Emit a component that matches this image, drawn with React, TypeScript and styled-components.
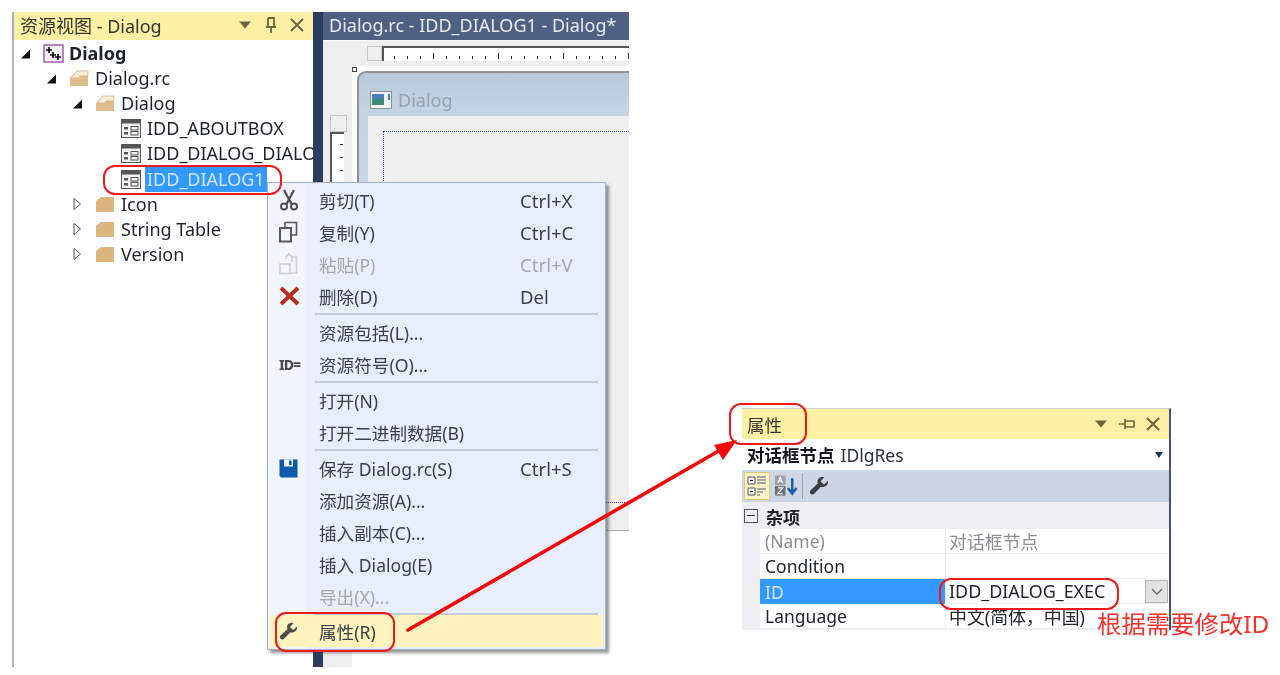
import React from "react"
import styled, { createGlobalStyle } from "styled-components"

const GlobalStyle = createGlobalStyle`
  html, body { margin: 0; padding: 0; background: #fff; }
  body {
    font-family: "Noto Sans", "Noto Sans CJK SC", sans-serif;
    color: #2b2f36;
    overflow: hidden;
  }
`

const Stage = styled.div`
  position: relative;
  width: 1280px;
  height: 675px;
  overflow: hidden;
  background: #fff;
  filter: blur(0.5px);
`

/* ---- left window ---- */
const Ide = styled.div`
  position: absolute;
  left: 12px;
  top: 12px;
  width: 617px;
  height: 655px;
  display: flex;
`

const ResourcePanel = styled.section`
  width: 299px;
  border-left: 2px solid #a9b4c6;
  background: #fff;
  display: flex;
  flex-direction: column;
  overflow: hidden;
`

const PanelTitle = styled.header`
  height: 28px;
  flex: none;
  box-sizing: border-box;
  background: #fcf0a4;
  display: flex;
  align-items: center;
  padding: 0 9px 2px 6px;
  font-size: 18px;
  color: #33352f;
`

const TitleText = styled.span`
  flex: 1;
  white-space: nowrap;
`

const TitleTools = styled.div<{ $gap: number }>`
  display: flex;
  align-items: center;
  gap: ${(p) => p.$gap}px;
`

const Tree = styled.ul`
  list-style: none;
  margin: 0;
  padding: 1px 0 0;
`

const TreeRow = styled.li<{ $level: number; $bold?: boolean }>`
  height: 25.1px;
  display: flex;
  align-items: center;
  padding-left: ${(p) => 6 + p.$level * 26}px;
  font-size: 18px;
  font-weight: ${(p) => (p.$bold ? 700 : 400)};
  color: #1f2328;
  white-space: nowrap;
`

const Twisty = styled.span`
  width: 23px;
  flex: none;
  display: flex;
  justify-content: flex-start;
`

const NodeIcon = styled.span`
  width: 26px;
  flex: none;
  display: flex;
  align-items: center;
`

const NodeLabel = styled.span<{ $selected?: boolean }>`
  line-height: 25px;
  padding: 0 2px;
  margin-left: -2px;
  background: ${(p) => (p.$selected ? "#3399ff" : "transparent")};
  color: ${(p) => (p.$selected ? "#cfe6ff" : "inherit")};
`

const Splitter = styled.div`
  width: 10px;
  flex: none;
  background: #2c3e60;
`

const EditorPane = styled.section`
  flex: 1;
  display: flex;
  flex-direction: column;
  overflow: hidden;
`

const EditorTab = styled.header`
  height: 28px;
  flex: none;
  box-sizing: border-box;
  background: #4e6183;
  color: #e6ebf3;
  font-size: 18px;
  display: flex;
  align-items: center;
  padding: 0 0 2px 6px;
  white-space: nowrap;
`

const Surface = styled.div`
  flex: 1;
  display: flex;
  min-height: 0;
`

const LeftRail = styled.div`
  width: 29px;
  flex: none;
  background: #eeeeef;
  border-top: 1px solid #f8f8f8;
  padding: 74px 0 0 7px;
  box-sizing: border-box;
`

const VRulerHead = styled.div`
  width: 15px;
  height: 15px;
  background: #f0f0f0;
  border: 1px solid #c6c8cc;
`

const VRuler = styled.div`
  width: 14px;
  height: 70px;
  background: #fff;
  border-left: 2px solid #555;
  border-top: 2px solid #555;
  display: flex;
  flex-direction: column;
  align-items: flex-end;
  gap: 12px;
  padding-top: 10px;
  box-sizing: border-box;
`

const VTick = styled.i`
  display: block;
  width: 3px;
  height: 1px;
  background: #333;
  margin-right: 1px;
`

const DesignColumn = styled.div`
  flex: 1;
  height: 490px;
  display: flex;
  flex-direction: column;
  background: #eeeeef;
  border-top: 1px solid #f8f8f8;
  overflow: hidden;
`

const HRulerRow = styled.div`
  height: 25px;
  flex: none;
  display: flex;
  padding: 5px 0 0 15px;
  box-sizing: border-box;
`

const RulerCorner = styled.div`
  width: 15px;
  height: 15px;
  flex: none;
  background: #f0f0f0;
  border: 1px solid #c6c8cc;
  box-sizing: border-box;
`

const HRuler = styled.div`
  flex: 1;
  height: 15px;
  background: #fff;
  border-left: 2px solid #555;
  border-top: 2px solid #555;
  display: flex;
  align-items: flex-end;
  gap: 12px;
  padding: 0 0 2px 10px;
  box-sizing: border-box;
  overflow: hidden;
`

const HTick = styled.i<{ $major: boolean }>`
  display: block;
  flex: none;
  width: 1px;
  height: ${(p) => (p.$major ? 6 : 3)}px;
  background: #333;
`

const DesignCanvas = styled.div`
  flex: 1;
  background: #fff;
  padding: 5px 0 0 5px;
  position: relative;
  display: flex;
`

const SizeHandle = styled.i`
  position: absolute;
  left: 0;
  top: 1px;
  width: 3px;
  height: 3px;
  border: 1px solid #444;
  background: #fff;
`

const DialogFrame = styled.div`
  flex: 1;
  border-left: 2px solid #8f9398;
  border-top: 2px solid #8f9398;
  border-bottom: 1px solid #a9abad;
  border-top-left-radius: 9px;
  background: linear-gradient(#b7c9da 0, #c4d4e3 40px, #d8e5f1 100%);
  display: flex;
  flex-direction: column;
  padding-left: 9px;
`

const DialogCaption = styled.div`
  height: 43px;
  flex: none;
  box-sizing: border-box;
  display: flex;
  align-items: center;
  gap: 6px;
  padding: 10px 0 0 2px;
  font-size: 18px;
  color: #9aa3ae;
`

const DialogClient = styled.div`
  flex: 1;
  background: #f0f0f0;
  padding: 15px 0 27px 15px;
  display: flex;
`

const GuideBox = styled.div`
  flex: 1;
  border-left: 1px dotted #3030ff;
  border-top: 1px dotted #3030ff;
  border-bottom: 1px dotted #3030ff;
`

/* ---- context menu ---- */
const Menu = styled.nav`
  position: absolute;
  left: 267px;
  top: 182px;
  width: 339px;
  box-sizing: border-box;
  background: linear-gradient(90deg, #f2f5fe 0, #f2f5fe 39px, #e8eefc 39px);
  border: 1px solid #a4afc0;
  box-shadow: 3px 3px 3px rgba(60, 60, 60, 0.55);
  padding: 1px 2px 2px 2px;
`

const MenuRow = styled.div<{ $disabled?: boolean }>`
  height: 32px;
  display: flex;
  align-items: center;
  font-size: 17.6px;
  white-space: nowrap;
  color: ${(p) => (p.$disabled ? "#a6a8ae" : "#3a3f48")};
`

const HotMenuRow = styled(MenuRow)`
  margin-top: -1px;
  background: #fef2bd;
`

const MenuIcon = styled.span`
  width: 49px;
  flex: none;
  padding-left: 9px;
  box-sizing: border-box;
  display: flex;
  align-items: center;
`

const MenuLabel = styled.span`
  width: 201px;
  flex: none;
`

const MenuKey = styled.span`
  font-size: 18.6px;
`

const MenuSeparator = styled.div`
  height: 2px;
  margin: 1px 5px 1px 45px;
  background: #c4cad6;
`

const IdGlyph = styled.span`
  font-size: 14px;
  font-weight: 800;
  color: #4a4a4a;
  letter-spacing: -1px;
`

/* ---- properties window ---- */
const PropsWindow = styled.section`
  position: absolute;
  left: 742px;
  top: 408px;
  width: 429px;
  height: 222px;
  box-sizing: border-box;
  border-right: 2px solid #3f5375;
  border-top: 1px solid #d0d0d0;
  display: flex;
  flex-direction: column;
  background: #fff;
`

const PropsTitle = styled.header`
  height: 30px;
  flex: none;
  background: #fcf0a4;
  display: flex;
  align-items: center;
  padding: 0 9px 0 5px;
  font-size: 17.5px;
  color: #33352f;
`

const PropsObject = styled.div`
  height: 31px;
  flex: none;
  display: flex;
  align-items: center;
  padding: 0 6px 0 5px;
  font-size: 17.5px;
  color: #2d3138;
  white-space: nowrap;
`

const ObjectName = styled.strong`
  font-weight: 700;
  margin-right: 6px;
  color: #15171a;
`

const ObjectType = styled.span`
  flex: 1;
`

const PropsToolbar = styled.div`
  height: 32px;
  flex: none;
  background: #ced5e4;
  display: flex;
  align-items: center;
  padding-left: 2px;
  gap: 3px;
`

const ToolButton = styled.span<{ $active?: boolean }>`
  width: 26px;
  height: 28px;
  display: flex;
  align-items: center;
  justify-content: center;
  box-sizing: border-box;
  background: ${(p) => (p.$active ? "#fdf3c8" : "transparent")};
  border: 1px solid ${(p) => (p.$active ? "#e0c878" : "transparent")};
`

const ToolDivider = styled.i`
  display: block;
  width: 1px;
  height: 26px;
  background: #98a2b6;
`

const Category = styled.div`
  height: 27px;
  flex: none;
  box-sizing: border-box;
  background: #ededf2;
  display: flex;
  align-items: center;
  padding: 1px 0 0 2px;
  gap: 8px;
  font-size: 17px;
  font-weight: 700;
  color: #202226;
`

const Expander = styled.span`
  width: 12px;
  height: 12px;
  border: 1px solid #555;
  position: relative;
  flex: none;
  &::after {
    content: "";
    position: absolute;
    left: 2px;
    right: 2px;
    top: 5px;
    height: 1px;
    background: #333;
  }
`

const PropGrid = styled.div`
  flex: 1;
  background: #ededf2;
  padding: 0 0 1px 18px;
  display: grid;
  grid-template-columns: 185px 1fr;
  grid-auto-rows: 25px;
  min-height: 0;
`

const PropName = styled.div<{ $selected?: boolean; $muted?: boolean }>`
  display: flex;
  align-items: center;
  padding-left: 5px;
  font-size: 17.5px;
  background: ${(p) => (p.$selected ? "#3399ff" : "#fff")};
  color: ${(p) => (p.$selected ? "#cfe6ff" : p.$muted ? "#8c8e92" : "#22252a")};
  border-bottom: ${(p) => (p.$selected ? "0" : "1px solid #f0f0f2")};
  box-sizing: border-box;
`

const PropValue = styled.div<{ $muted?: boolean }>`
  display: flex;
  align-items: center;
  justify-content: space-between;
  padding: 0 1px 0 3px;
  margin-left: 1px;
  font-size: 17.9px;
  background: #fff;
  color: ${(p) => (p.$muted ? "#8c8e92" : "#22252a")};
  border-bottom: 1px solid #f0f0f2;
  box-sizing: border-box;
  white-space: nowrap;
`

const ComboButton = styled.span`
  width: 23px;
  height: 23px;
  flex: none;
  display: flex;
  align-items: center;
  justify-content: center;
  background: #e2e2e2;
  border: 1px solid #b4b4b4;
  box-sizing: border-box;
`

/* ---- annotations ---- */
const Callout = styled.div<{ $x: number; $y: number; $w: number; $h: number; $r: number }>`
  position: absolute;
  left: ${(p) => p.$x}px;
  top: ${(p) => p.$y}px;
  width: ${(p) => p.$w}px;
  height: ${(p) => p.$h}px;
  box-sizing: border-box;
  border: 2px solid #f01818;
  border-radius: ${(p) => p.$r}px;
  pointer-events: none;
`

const Note = styled.div`
  position: absolute;
  left: 1097px;
  top: 608px;
  font-size: 24.4px;
  line-height: 32px;
  color: #f2312c;
  white-space: nowrap;
`

const ArrowLayer = styled.svg`
  position: absolute;
  left: 0;
  top: 0;
  pointer-events: none;
`

/* ---- drawn icons ---- */
const Collapse = () => (
  <svg width="12" height="12" viewBox="0 0 12 12">
    <path d="M10 1.5V10.5H1Z" fill="#111" />
  </svg>
)

const Expand = () => (
  <svg width="12" height="14" viewBox="0 0 12 14">
    <path d="M2 1.5L8.5 7L2 12.5Z" fill="#fff" stroke="#555" />
  </svg>
)

const RootIcon = () => (
  <svg width="21" height="19" viewBox="0 0 21 19">
    <rect x="1" y="1" width="19" height="17" fill="#f4f1f6" stroke="#a868b0" strokeWidth="1.6" />
    <path d="M6 3v6M3 6h6M10 8v6M7 11h6M15 10v6M12 13h6" stroke="#111" strokeWidth="1.7" />
  </svg>
)

const FolderOpen = () => (
  <svg width="20" height="17" viewBox="0 0 20 17">
    <path d="M1 7L8 1H19V15H1Z" fill="#f3e4cd" />
    <path d="M1 8H9L11 6H19V16H1Z" fill="#dfbd8a" />
    <path d="M8 1H19V6H11L9 8H2Z" fill="#f6ecdc" stroke="#dfbd8a" />
  </svg>
)

const FolderClosed = () => (
  <svg width="20" height="17" viewBox="0 0 20 17">
    <path d="M1 5L6 1H19V16H1Z" fill="#dcb67e" />
  </svg>
)

const DialogNode = () => (
  <svg width="20" height="19" viewBox="0 0 20 19">
    <rect x="0.5" y="0.5" width="19" height="18" fill="#f2f2f2" stroke="#555" />
    <rect x="0.5" y="0.5" width="19" height="4" fill="#555" />
    <path d="M3 8h4v2.5H3zM3 13h4v2.5H3z" fill="#555" />
    <rect x="10" y="7.5" width="7" height="3.5" fill="none" stroke="#555" />
    <rect x="10" y="12.5" width="7" height="3.5" fill="none" stroke="#555" />
  </svg>
)

const Scissors = () => (
  <svg width="20" height="22" viewBox="0 0 20 22">
    <path d="M5 1L12.5 15M15 1L7.5 15" stroke="#4c4f52" strokeWidth="2.2" fill="none" />
    <circle cx="5" cy="17.5" r="3" fill="none" stroke="#4c4f52" strokeWidth="2" />
    <circle cx="15" cy="17.5" r="3" fill="none" stroke="#4c4f52" strokeWidth="2" />
  </svg>
)

const CopyIcon = () => (
  <svg width="19" height="22" viewBox="0 0 19 22">
    <path d="M6 6V1.5H17.5V14H12" fill="none" stroke="#55585c" strokeWidth="1.6" />
    <rect x="1" y="7" width="11" height="13.5" fill="#f2f5fe" stroke="#55585c" strokeWidth="2" />
  </svg>
)

const PasteIcon = () => (
  <svg width="19" height="22" viewBox="0 0 19 22">
    <path d="M7 6V4L10 1L13 4V9M13 4H17.5V20H10" fill="none" stroke="#cdd0d6" strokeWidth="1.6" />
    <rect x="1" y="11" width="10" height="9.5" fill="none" stroke="#cdd0d6" strokeWidth="1.6" />
  </svg>
)

const DeleteIcon = () => (
  <svg width="21" height="20" viewBox="0 0 21 20">
    <path d="M2 2L19 18M19 2L2 18" stroke="#b4301c" strokeWidth="4" />
  </svg>
)

const SaveIcon = () => (
  <svg width="19" height="19" viewBox="0 0 19 19">
    <path d="M0.5 0.5H18.5V18.5H2L0.5 17Z" fill="#0d5aa8" />
    <rect x="5" y="0.5" width="9" height="7" fill="#f2f5fe" />
    <rect x="10" y="1.5" width="2.5" height="4.5" fill="#0d5aa8" />
  </svg>
)

const Wrench = ({ size = 19, color = "#4b4d50" }: { size?: number; color?: string }) => (
  <svg width={size} height={size} viewBox="0 0 19 19">
    <path
      d="M18 4.5L14.2 8L11 5L14.5 1.2C11.5 0 8 2 8 5.2C8 6 8.2 6.6 8.4 7.2L1.5 13.5C0.5 14.6 0.7 15.8 1.5 16.8C2.5 17.8 3.9 17.8 5 16.8L11.4 10.3C14.8 11.4 18.8 8.5 18 4.5Z"
      fill={color}
    />
  </svg>
)

const WindowGlyphs = ({ horizontalPin }: { horizontalPin?: boolean }) => (
  <TitleTools $gap={horizontalPin ? 11 : 13}>
    <svg width="14" height="8" viewBox="0 0 14 8">
      <path d="M1 0.5H13L7 7.5Z" fill="#6d6540" />
    </svg>
    {horizontalPin ? (
      <svg width="16" height="12" viewBox="0 0 16 12">
        <path d="M0 6H6M6 1V11M6 3H15V9H6" fill="none" stroke="#6d6540" strokeWidth="1.6" />
      </svg>
    ) : (
      <svg width="12" height="16" viewBox="0 0 12 16">
        <path d="M6 10V16M1 10H11M3 1V10M3 1H9V10" fill="none" stroke="#6d6540" strokeWidth="1.8" />
      </svg>
    )}
    <svg width="14" height="14" viewBox="0 0 14 14">
      <path d="M1 1L13 13M13 1L1 13" stroke="#6d6540" strokeWidth="2" />
    </svg>
  </TitleTools>
)

const CaptionIcon = () => (
  <svg width="22" height="18" viewBox="0 0 22 18">
    <rect x="0.5" y="0.5" width="21" height="17" fill="#eef2f4" stroke="#8b8f92" />
    <rect x="2" y="3" width="12" height="11" fill="#3e8a78" />
    <rect x="2" y="3" width="12" height="5" fill="#4f7fb0" />
    <rect x="18" y="3" width="2" height="6" fill="#3e8a78" />
  </svg>
)

const CategorizedIcon = () => (
  <svg width="21" height="22" viewBox="0 0 21 22">
    <path d="M1 2h7v7H1zM1 13h7v7H1z" fill="#f4f4f4" stroke="#555" />
    <path d="M3 5.5h3M3 16.5h3" stroke="#111" />
    <path d="M10 2h9M10 5h9M10 8h9M10 14h9M10 17h6M10 20h3" stroke="#8a8d90" strokeWidth="1.4" />
  </svg>
)

const SortIcon = () => (
  <svg width="25" height="24" viewBox="0 0 25 24">
    <rect x="1" y="1" width="11" height="10" fill="#9ca0a6" />
    <rect x="1" y="12" width="11" height="10" fill="#6e7176" />
    <path d="M4 9L6.5 3L9 9M5 7H8M4 14H9L4 20H9" stroke="#fff" strokeWidth="1.3" fill="none" />
    <path d="M19 4V19M14.5 14L19 20L23.5 14" stroke="#1d5fa8" strokeWidth="2.6" fill="none" />
  </svg>
)

const tree = [
  { level: 0, label: "Dialog", bold: true, open: true, icon: <RootIcon /> },
  { level: 1, label: "Dialog.rc", open: true, icon: <FolderOpen /> },
  { level: 2, label: "Dialog", open: true, icon: <FolderOpen /> },
  { level: 3, label: "IDD_ABOUTBOX", icon: <DialogNode /> },
  { level: 3, label: "IDD_DIALOG_DIALOG", icon: <DialogNode /> },
  { level: 3, label: "IDD_DIALOG1", icon: <DialogNode />, selected: true },
  { level: 2, label: "Icon", open: false, icon: <FolderClosed /> },
  { level: 2, label: "String Table", open: false, icon: <FolderClosed /> },
  { level: 2, label: "Version", open: false, icon: <FolderClosed /> },
]

type Item = { label: string; key?: string; icon?: React.ReactNode; disabled?: boolean }

const menuGroups: Item[][] = [
  [
    { label: "剪切(T)", key: "Ctrl+X", icon: <Scissors /> },
    { label: "复制(Y)", key: "Ctrl+C", icon: <CopyIcon /> },
    { label: "粘贴(P)", key: "Ctrl+V", icon: <PasteIcon />, disabled: true },
    { label: "删除(D)", key: "Del", icon: <DeleteIcon /> },
  ],
  [
    { label: "资源包括(L)..." },
    { label: "资源符号(O)...", icon: <IdGlyph>ID=</IdGlyph> },
  ],
  [{ label: "打开(N)" }, { label: "打开二进制数据(B)" }],
  [
    { label: "保存 Dialog.rc(S)", key: "Ctrl+S", icon: <SaveIcon /> },
    { label: "添加资源(A)..." },
    { label: "插入副本(C)..." },
    { label: "插入 Dialog(E)" },
    { label: "导出(X)...", disabled: true },
  ],
]

export default function App() {
  return (
    <Stage>
      <GlobalStyle />
      <Ide>
        <ResourcePanel>
          <PanelTitle>
            <TitleText>资源视图 - Dialog</TitleText>
            <WindowGlyphs />
          </PanelTitle>
          <Tree>
            {tree.map((n) => (
              <TreeRow key={n.label + n.level} $level={n.level} $bold={n.bold}>
                <Twisty>{n.open === undefined ? null : n.open ? <Collapse /> : <Expand />}</Twisty>
                <NodeIcon>{n.icon}</NodeIcon>
                <NodeLabel $selected={n.selected}>{n.label}</NodeLabel>
              </TreeRow>
            ))}
          </Tree>
        </ResourcePanel>
        <Splitter />
        <EditorPane>
          <EditorTab>Dialog.rc - IDD_DIALOG1 - Dialog*</EditorTab>
          <Surface>
            <LeftRail>
              <VRulerHead />
              <VRuler>
                {[0, 1, 2].map((i) => (
                  <VTick key={i} />
                ))}
              </VRuler>
            </LeftRail>
            <DesignColumn>
              <HRulerRow>
                <RulerCorner />
                <HRuler>
                  {Array.from({ length: 20 }, (_, i) => (
                    <HTick key={i} $major={i % 5 === 3} />
                  ))}
                </HRuler>
              </HRulerRow>
              <DesignCanvas>
                <SizeHandle />
                <DialogFrame>
                  <DialogCaption>
                    <CaptionIcon />
                    Dialog
                  </DialogCaption>
                  <DialogClient>
                    <GuideBox />
                  </DialogClient>
                </DialogFrame>
              </DesignCanvas>
            </DesignColumn>
          </Surface>
        </EditorPane>
      </Ide>

      <Menu>
        {menuGroups.map((group, g) => (
          <React.Fragment key={g}>
            {group.map((item) => (
              <MenuRow key={item.label} $disabled={item.disabled}>
                <MenuIcon>{item.icon}</MenuIcon>
                <MenuLabel>{item.label}</MenuLabel>
                <MenuKey>{item.key}</MenuKey>
              </MenuRow>
            ))}
            <MenuSeparator />
          </React.Fragment>
        ))}
        <HotMenuRow>
          <MenuIcon>
            <Wrench />
          </MenuIcon>
          <MenuLabel>属性(R)</MenuLabel>
        </HotMenuRow>
      </Menu>

      <PropsWindow>
        <PropsTitle>
          <TitleText>属性</TitleText>
          <WindowGlyphs horizontalPin />
        </PropsTitle>
        <PropsObject>
          <ObjectName>对话框节点</ObjectName>
          <ObjectType>IDlgRes</ObjectType>
          <svg width="8" height="6" viewBox="0 0 8 6">
            <path d="M0 0H8L4 6Z" fill="#26324a" />
          </svg>
        </PropsObject>
        <PropsToolbar>
          <ToolButton $active>
            <CategorizedIcon />
          </ToolButton>
          <ToolButton>
            <SortIcon />
          </ToolButton>
          <ToolDivider />
          <ToolButton>
            <Wrench size={20} color="#3c3e42" />
          </ToolButton>
        </PropsToolbar>
        <Category>
          <Expander />
          杂项
        </Category>
        <PropGrid>
          <PropName $muted>(Name)</PropName>
          <PropValue $muted>对话框节点</PropValue>
          <PropName>Condition</PropName>
          <PropValue />
          <PropName $selected>ID</PropName>
          <PropValue>
            IDD_DIALOG_EXEC
            <ComboButton>
              <svg width="12" height="7" viewBox="0 0 12 7">
                <path d="M1 1L6 6L11 1" fill="none" stroke="#666" strokeWidth="1.3" />
              </svg>
            </ComboButton>
          </PropValue>
          <PropName>Language</PropName>
          <PropValue>中文(简体，中国)</PropValue>
        </PropGrid>
      </PropsWindow>

      <ArrowLayer width="1280" height="675" viewBox="0 0 1280 675">
        <path d="M408 630L722 449" stroke="#f40808" strokeWidth="3.6" strokeLinecap="round" />
        <path d="M737 440L714 445L723 460Z" fill="#f40808" />
      </ArrowLayer>
      <Callout $x={103} $y={165} $w={179} $h={30} $r={12} />
      <Callout $x={275} $y={612} $w={120} $h={40} $r={11} />
      <Callout $x={729} $y={403} $w={78} $h={42} $r={12} />
      <Callout $x={939} $y={578} $w={180} $h={32} $r={12} />
      <Note>根据需要修改ID</Note>
    </Stage>
  )
}
